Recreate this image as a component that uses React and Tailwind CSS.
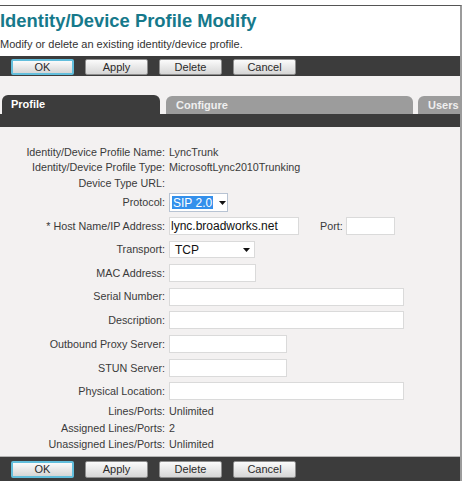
import React from 'react';

function Btn({ label, focused, tall }) {
  return (
    <button
      className={`w-[63px] ${tall ? 'h-[17px]' : 'h-[16px]'} rounded-[2px] bg-gradient-to-b from-[#fbfbfb] to-[#d6d6d6] text-[11px] leading-none text-[#2a2a2a] ${
        focused ? 'border-2 border-[#62bedc]' : 'border border-[#8e8e8e]'
      }`}
    >
      {label}
    </button>
  );
}

function Toolbar({ bottom }) {
  return (
    <div
      className={`flex gap-[11px] bg-[#3c3c3c] pl-[11px] ${
        bottom ? 'h-[25px] border-t border-[#b5b5b5] pt-[4px]' : 'h-[20px] pt-[3px]'
      }`}
    >
      <Btn label="OK" focused tall={bottom} />
      <Btn label="Apply" tall={bottom} />
      <Btn label="Delete" tall={bottom} />
      <Btn label="Cancel" tall={bottom} />
    </div>
  );
}

function Arrow() {
  return (
    <svg width="7" height="4" viewBox="0 0 7 4">
      <path d="M0 0H7L3.5 4Z" fill="#111" />
    </svg>
  );
}

function TextBox({ w }) {
  return <div className={`h-[18px] border border-[#dadada] bg-white ${w}`} />;
}

const rows = [
  { label: 'Identity/Device Profile Name:', h: 'h-[16px]', value: 'LyncTrunk' },
  { label: 'Identity/Device Profile Type:', h: 'h-[15px]', value: 'MicrosoftLync2010Trunking' },
  { label: 'Device Type URL:', h: 'h-[16px]', value: '' },
  { label: 'Protocol:', h: 'h-[23px]', kind: 'protocol' },
  { label: '* Host Name/IP Address:', h: 'h-[24px]', kind: 'host' },
  { label: 'Transport:', h: 'h-[23px]', kind: 'transport' },
  { label: 'MAC Address:', h: 'h-[24px]', input: 'w-[87px]' },
  { label: 'Serial Number:', h: 'h-[23px]', input: 'w-[235px]' },
  { label: 'Description:', h: 'h-[24px]', input: 'w-[235px]' },
  { label: 'Outbound Proxy Server:', h: 'h-[24px]', input: 'w-[118px]' },
  { label: 'STUN Server:', h: 'h-[24px]', input: 'w-[118px]' },
  { label: 'Physical Location:', h: 'h-[22px]', input: 'w-[235px]' },
  { label: 'Lines/Ports:', h: 'h-[18px]', value: 'Unlimited' },
  { label: 'Assigned Lines/Ports:', h: 'h-[16px]', value: '2' },
  { label: 'Unassigned Lines/Ports:', h: 'h-[16px]', value: 'Unlimited' },
];

function Field({ row }) {
  if (row.kind === 'protocol') {
    return (
      <div className="flex h-[19px] w-[59px] items-center border border-[#b7c3d3] bg-white pl-[2px]">
        <span className="flex h-[13px] items-center bg-[#3390ec] px-[1px] text-[12px] text-white">SIP 2.0</span>
        <span className="ml-[6px]">
          <Arrow />
        </span>
      </div>
    );
  }
  if (row.kind === 'host') {
    return (
      <div className="flex items-center">
        <div className="flex h-[18px] w-[130px] items-center border border-[#dadada] bg-white pl-[1px] text-[12px] text-[#111]">
          lync.broadworks.net
        </div>
        <span className="ml-[21px] mr-[3px] text-[10.75px] text-[#3a3a3a]">Port:</span>
        <TextBox w="w-[49px]" />
      </div>
    );
  }
  if (row.kind === 'transport') {
    return (
      <div className="flex h-[17px] w-[86px] items-center justify-between border border-[#dadada] bg-white pl-[5px] pr-[4px] text-[12px] text-[#111]">
        <span>TCP</span>
        <Arrow />
      </div>
    );
  }
  if (row.input) return <TextBox w={row.input} />;
  return <span className="text-[10.75px] text-[#3a3a3a]">{row.value}</span>;
}

export default function App() {
  return (
    <div className="h-[486px] w-[465px] overflow-hidden bg-white font-['Liberation_Sans',Arial,sans-serif]">
      <div className="mt-[5px] w-[462px] border-t border-r-2 border-t-[#555] border-r-[#9b9b9b] bg-[#f0f0f0]">
        {/* Header */}
        <div className="h-[50px] bg-white pt-[4px]">
          <h1 className="text-[18.4px] font-bold leading-[21px] text-[#16798b]">Identity/Device Profile Modify</h1>
          <p className="mt-[7px] text-[11px] leading-[13px] text-[#333]">
            Modify or delete an existing identity/device profile.
          </p>
        </div>

        <Toolbar />

        {/* Tabs */}
        <div className="bg-[#f3f1f1] pt-[19px]">
          <div className="flex h-[19px] items-end pl-[2px]">
            <div className="flex h-[19px] w-[158px] items-center rounded-t-[6px] bg-[#3c3c3c] pl-[9px] text-[11px] font-bold text-white">
              Profile
            </div>
            <div className="ml-[6px] flex h-[18px] w-[247px] items-center rounded-t-[6px] bg-[#9c9c9c] pl-[10px] text-[11px] font-bold text-[#efefef]">
              Configure
            </div>
            <div className="ml-[5px] flex h-[18px] flex-1 items-center rounded-tl-[6px] bg-[#9c9c9c] pl-[10px] text-[11px] font-bold text-[#efefef]">
              Users
            </div>
          </div>
          <div className="h-[13px] bg-[#3c3c3c]" />

          {/* Form */}
          <div className="pb-[4px] pt-[17px]">
            {rows.map((row) => (
              <div key={row.label} className={`flex items-center ${row.h}`}>
                <div className="w-[165px] shrink-0 text-right text-[10.75px] text-[#3a3a3a]">{row.label}</div>
                <div className="ml-[4px] flex items-center">
                  <Field row={row} />
                </div>
              </div>
            ))}
          </div>
        </div>

        <Toolbar bottom />
      </div>
    </div>
  );
}
